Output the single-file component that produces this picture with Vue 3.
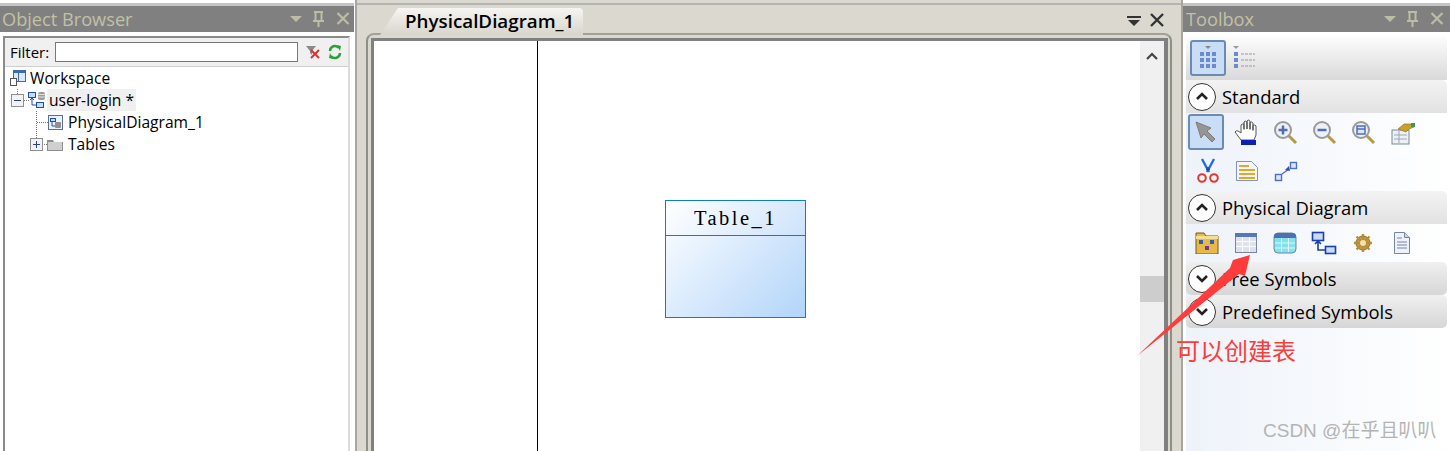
<script setup>
const treeRows = [
  { label: 'Workspace', kind: 'workspace', indent: 10, selected: false },
  { label: 'user-login *', kind: 'model', indent: 28, selected: true },
  { label: 'PhysicalDiagram_1', kind: 'diagram', indent: 48, selected: false },
  { label: 'Tables', kind: 'folder', indent: 47, selected: false },
];
</script>

<template>
  <div class="app">
    <section class="panel panel--left">
      <header class="titlebar">
        <span class="titlebar__text">Object Browser</span>
        <svg class="titlebar__icons" width="66" height="20" viewBox="0 0 66 20">
          <path d="M2 7h12l-6 6z" fill="#bdbca4" />
          <path d="M26 3h9M27.500 3v9M33.500 3v9M25 12h11M30.500 12v6" stroke="#bdbca4" stroke-width="2" fill="none" />
          <path d="M49.500 4l11 11M60.500 4l-11 11" stroke="#bdbca4" stroke-width="2.200" />
        </svg>
      </header>
      <div class="browser">
        <div class="filter">
          <label class="filter__label">Filter:</label>
          <input class="filter__input" type="text" />
          <svg width="16" height="16" viewBox="0 0 16 16">
            <path d="M1 2h10L7 7v4L5 9V7z" fill="#8a8a8a" />
            <path d="M6 6l8 8M14 6l-8 8" stroke="#d8342c" stroke-width="2" />
          </svg>
          <svg class="filter__refresh" width="14" height="16" viewBox="0 0 14 16">
            <path d="M2 7a5 5 0 0 1 9-3M12 9a5 5 0 0 1-9 3" stroke="#2f9e3a" stroke-width="2.400" fill="none" />
            <path d="M9 1l4 1-1 5zM5 15l-4-1 1-5z" fill="#2f9e3a" />
          </svg>
        </div>
        <div class="tree">
          <svg class="tree__lines" width="60" height="90" viewBox="0 0 60 90">
            <path d="M17.500 22v6M24 33.500h5M36.500 44v33M37 55.500h12M44 77.500h3" stroke="#777" stroke-dasharray="1 1" fill="none" />
            <rect x="11.500" y="27.500" width="12" height="12" fill="#f2f2f2" stroke="#8f8f8f" />
            <path d="M14 33.500h7" stroke="#29408c" />
            <rect x="30.500" y="71.500" width="12" height="12" fill="#f2f2f2" stroke="#8f8f8f" />
            <path d="M33 77.500h7M36.500 74v7" stroke="#29408c" />
          </svg>
          <div
            v-for="row in treeRows"
            :key="row.label"
            class="tree__row"
            :style="{ paddingLeft: row.indent + 'px' }"
          >
            <svg v-if="row.kind === 'workspace'" width="17" height="18" viewBox="0 0 17 18">
              <rect x="3.500" y="1.500" width="12" height="11" fill="#dce8f8" stroke="#3f68b4" />
              <path d="M3 2h13v2H3z" fill="#3f68b4" />
              <path d="M8.500 4v8" stroke="#3f68b4" />
              <rect x="0.500" y="9.500" width="6" height="7" fill="#fff" stroke="#555" />
            </svg>
            <svg v-else-if="row.kind === 'model'" width="18" height="18" viewBox="0 0 18 18">
              <rect x="0.500" y="1.500" width="7" height="5" fill="#c8dcf6" stroke="#1f4fae" />
              <rect x="8.500" y="11.500" width="7" height="5" fill="#c8dcf6" stroke="#1f4fae" />
              <path d="M4 7v7h4M2 9l2-2 2 2" stroke="#1f4fae" fill="none" />
              <rect x="10" y="1" width="7" height="8" rx="2" fill="#9a9a9a" />
              <path d="M10 3.500h7M10 6h7" stroke="#e4e4e4" />
            </svg>
            <svg v-else-if="row.kind === 'diagram'" width="17" height="15" viewBox="0 0 17 15">
              <rect x="0.500" y="0.500" width="14" height="14" fill="#eef2fa" stroke="#5a6f98" />
              <rect x="2.500" y="3.500" width="5" height="3" fill="#c8dcf6" stroke="#1f4fae" />
              <rect x="7" y="7" width="6" height="6" rx="1" fill="#8f8f8f" />
              <path d="M4 7v4h3" stroke="#1f4fae" fill="none" />
            </svg>
            <svg v-else width="18" height="13" viewBox="0 0 18 13">
              <path d="M0 2h6l1 2h9v9H0z" fill="#8e8e8e" />
              <path d="M1 4h14v8H1z" fill="#cfcfcf" />
            </svg>
            <span class="tree__label" :class="{ 'tree__label--selected': row.selected }">{{ row.label }}</span>
          </div>
        </div>
      </div>
    </section>

    <section class="panel panel--center">
      <div class="tabstrip">
        <div class="tab">PhysicalDiagram_1</div>
        <svg class="tabstrip__icons" width="50" height="20" viewBox="0 0 50 20">
          <path d="M1 6h14v2H1zM2 10h12l-6 6z" fill="#333" />
          <path d="M25 4l12 12M37 4L25 16" stroke="#333" stroke-width="2.400" />
        </svg>
      </div>
      <div class="frame">
        <div class="frame__inner">
          <div class="canvas">
            <div class="canvas__line"></div>
            <div class="entity">
              <div class="entity__name">Table_1</div>
              <div class="entity__body"></div>
            </div>
          </div>
          <div class="scrollbar">
            <svg class="scrollbar__up" width="14" height="10" viewBox="0 0 14 10">
              <path d="M2 8l5-5 5 5" stroke="#444" stroke-width="2.200" fill="none" />
            </svg>
            <div class="scrollbar__thumb"></div>
          </div>
        </div>
      </div>
    </section>

    <section class="panel panel--right">
      <header class="titlebar">
        <span class="titlebar__text">Toolbox</span>
        <svg class="titlebar__icons" width="66" height="20" viewBox="0 0 66 20">
          <path d="M2 7h12l-6 6z" fill="#bdbca4" />
          <path d="M26 3h9M27.500 3v9M33.500 3v9M25 12h11M30.500 12v6" stroke="#bdbca4" stroke-width="2" fill="none" />
          <path d="M49.500 4l11 11M60.500 4l-11 11" stroke="#bdbca4" stroke-width="2.200" />
        </svg>
      </header>
      <div class="toolbox">
        <div class="viewbar">
          <button class="toolbtn toolbtn--active">
            <svg width="20" height="24" viewBox="0 0 20 24">
              <path d="M7 0h6l-3 3z" fill="#888" />
              <g fill="#6b8ccc">
                <rect x="2" y="6" width="4" height="4" /><rect x="8" y="6" width="4" height="4" /><rect x="14" y="6" width="4" height="4" />
                <rect x="2" y="12" width="4" height="4" /><rect x="8" y="12" width="4" height="4" /><rect x="14" y="12" width="4" height="4" />
                <rect x="2" y="18" width="4" height="4" /><rect x="8" y="18" width="4" height="4" /><rect x="14" y="18" width="4" height="4" />
              </g>
            </svg>
          </button>
          <svg class="viewbar__list" width="24" height="24" viewBox="0 0 24 24">
            <path d="M1 0h6L4 3z" fill="#999" />
            <g fill="#6b8ccc"><rect x="2" y="6" width="4" height="4" /><rect x="2" y="12" width="4" height="4" /><rect x="2" y="18" width="4" height="4" /></g>
            <path d="M9 8h14M9 14h14M9 20h14" stroke="#999" stroke-dasharray="3 1" />
          </svg>
        </div>

        <div class="group">
          <span class="group__toggle"><svg width="14" height="9" viewBox="0 0 14 9"><path d="M2 7l5-5 5 5" stroke="#222" stroke-width="2.600" fill="none" /></svg></span>
          Standard
        </div>
        <div class="tools">
          <span class="tool tool--active">
            <svg width="26" height="26" viewBox="0 0 26 26">
              <path d="M3 3l15 6-4 3 8 8-3 3-8-8-3 4z" fill="#959595" stroke="#7d7d7d" />
            </svg>
          </span>
          <span class="tool">
            <svg width="26" height="28" viewBox="0 0 26 28">
              <path d="M7 21L1 13q1-2 3-1l3 2V6q1-2 3 0v4V3q1-2 3 0v7V2q1-2 3 0v8V4q1-2 3 0v7-4q2-2 3 0v9l-2 5z" fill="#fff" stroke="#555" />
              <path d="M10 3v8M13 2v8M16 3v8M19 5v7" stroke="#666" stroke-width="0.800" />
              <rect x="7" y="21" width="15" height="5" fill="#0f1fb4" />
            </svg>
          </span>
          <span class="tool">
            <svg width="26" height="26" viewBox="0 0 26 26">
              <path d="M15 15l8 8" stroke="#b89a3c" stroke-width="3" />
              <circle cx="10" cy="10" r="8" fill="#eef0f6" stroke="#9a9a9a" stroke-width="2" />
              <path d="M5.500 10h9M10 5.500v9" stroke="#4f6fb4" stroke-width="2.500" />
            </svg>
          </span>
          <span class="tool">
            <svg width="26" height="26" viewBox="0 0 26 26">
              <path d="M15 15l8 8" stroke="#b89a3c" stroke-width="3" />
              <circle cx="10" cy="10" r="8" fill="#eef0f6" stroke="#9a9a9a" stroke-width="2" />
              <path d="M5.500 10h9" stroke="#4f6fb4" stroke-width="2.500" />
            </svg>
          </span>
          <span class="tool">
            <svg width="26" height="26" viewBox="0 0 26 26">
              <path d="M15 15l8 8" stroke="#b89a3c" stroke-width="3" />
              <circle cx="10" cy="10" r="8" fill="#eef0f6" stroke="#9a9a9a" stroke-width="2" />
              <rect x="6" y="6" width="8" height="8" fill="#dbe6fa" stroke="#4f6fb4" stroke-width="1.500" />
              <path d="M6 9h8" stroke="#4f6fb4" stroke-width="1.500" />
            </svg>
          </span>
          <span class="tool">
            <svg width="26" height="26" viewBox="0 0 26 26">
              <rect x="2" y="10" width="17" height="14" fill="#eef0f4" stroke="#7a8a9a" />
              <path d="M4 15h13M4 19h13M9 11v12" stroke="#9aa8b8" />
              <path d="M8 9l6-5h7l3 3-5 2-3 3z" fill="#c9a227" stroke="#7d6a1e" stroke-width="0.600" />
              <path d="M21 3h4v4h-4z" fill="#3e9a50" />
            </svg>
          </span>
          <span class="tool">
            <svg width="24" height="26" viewBox="0 0 24 26">
              <path d="M6 1l7 13M18 1l-7 13" stroke="#1f6fe0" stroke-width="2.400" />
              <circle cx="12" cy="11" r="2" fill="#1f4fae" />
              <circle cx="6" cy="20" r="3.800" fill="none" stroke="#e03a30" stroke-width="2" />
              <circle cx="18" cy="20" r="3.800" fill="none" stroke="#e03a30" stroke-width="2" />
            </svg>
          </span>
          <span class="tool">
            <svg width="24" height="22" viewBox="0 0 24 22">
              <path d="M1.500 1.500h15l6 6v13h-21z" fill="#f4f6fc" stroke="#7f93c4" />
              <path d="M4 6h10M4 10h16M4 14h16M4 18h16" stroke="#e0ab22" stroke-width="2" />
            </svg>
          </span>
          <span class="tool">
            <svg width="24" height="22" viewBox="0 0 24 22">
              <rect x="1.500" y="14.500" width="6" height="6" fill="#dbe6fa" stroke="#4f6fc4" stroke-width="1.400" />
              <rect x="16.500" y="2.500" width="6" height="6" fill="#dbe6fa" stroke="#4f6fc4" stroke-width="1.400" />
              <path d="M8 14l7-5" stroke="#4f6fc4" stroke-width="1.400" />
              <path d="M15 6l1 5-5-1z" fill="#33539c" />
            </svg>
          </span>
        </div>

        <div class="group">
          <span class="group__toggle"><svg width="14" height="9" viewBox="0 0 14 9"><path d="M2 7l5-5 5 5" stroke="#222" stroke-width="2.600" fill="none" /></svg></span>
          Physical Diagram
        </div>
        <div class="tools tools--single">
          <span class="tool">
            <svg width="24" height="22" viewBox="0 0 24 22">
              <path d="M1 1h8l2 3h12v18H1z" fill="#e8b948" stroke="#6e5a1e" />
              <path d="M1 4h22v3H1z" fill="#f6dd90" />
              <rect x="4" y="8" width="4" height="4" fill="#2f5fb4" /><rect x="15" y="8" width="4" height="4" fill="#2f5fb4" /><rect x="10" y="14" width="4" height="4" fill="#6a3a9c" />
            </svg>
          </span>
          <span class="tool">
            <svg width="24" height="22" viewBox="0 0 24 22">
              <rect x="1.500" y="1.500" width="21" height="19" fill="#dfe2ea" stroke="#7486a8" />
              <rect x="1" y="1" width="22" height="4" fill="#5a78b8" />
              <path d="M2 9.500h20M2 14.500h20M8.500 5v15M15.500 5v15" stroke="#fff" />
            </svg>
          </span>
          <span class="tool">
            <svg width="24" height="22" viewBox="0 0 24 22">
              <rect x="1" y="1" width="22" height="20" rx="4" fill="#7fe4ec" stroke="#7486a8" />
              <path d="M1 6V5a4 4 0 0 1 4-4h14a4 4 0 0 1 4 4v1z" fill="#4f6fb4" />
              <path d="M2 11h20M2 16h20M8.500 6v14M15.500 6v14" stroke="#e6f4fa" />
            </svg>
          </span>
          <span class="tool">
            <svg width="26" height="24" viewBox="0 0 26 24">
              <rect x="1.500" y="1.500" width="11" height="8" fill="#c8dcf6" stroke="#1a3fb0" stroke-width="1.600" />
              <rect x="14.500" y="15.500" width="10" height="7" fill="#c8dcf6" stroke="#1a3fb0" stroke-width="1.600" />
              <path d="M7 10v9h7M4 13l3-3 3 3" stroke="#1a3fb0" stroke-width="1.600" fill="none" />
            </svg>
          </span>
          <span class="tool">
            <svg width="20" height="20" viewBox="0 0 20 20">
              <circle cx="10" cy="10" r="7" fill="#c49a48" stroke="#8a6a2a" />
              <path d="M10 1v18M1 10h18M3.500 3.500l13 13M16.500 3.500l-13 13" stroke="#b78d3e" stroke-width="2.400" />
              <circle cx="10" cy="10" r="3" fill="#f4e2a8" />
            </svg>
          </span>
          <span class="tool">
            <svg width="20" height="24" viewBox="0 0 20 24">
              <path d="M2.500 1.500h10l5 5v16h-15z" fill="#eef2fa" stroke="#7486a8" />
              <path d="M12.500 1.500v5h5" fill="#c8d4e8" stroke="#7486a8" />
              <path d="M5 7h5M5 11h10M5 14h10M5 17h10" stroke="#7486a8" />
            </svg>
          </span>
        </div>

        <div class="group group--closed">
          <span class="group__toggle"><svg width="14" height="9" viewBox="0 0 14 9"><path d="M2 2l5 5 5-5" stroke="#222" stroke-width="2.600" fill="none" /></svg></span>
          Free Symbols
        </div>
        <div class="group group--closed">
          <span class="group__toggle"><svg width="14" height="9" viewBox="0 0 14 9"><path d="M2 2l5 5 5-5" stroke="#222" stroke-width="2.600" fill="none" /></svg></span>
          Predefined Symbols
        </div>
      </div>
    </section>

    <!-- annotation drawn over the screenshot -->
    <svg class="arrow" width="130" height="110" viewBox="0 0 130 110">
      <path d="M1 106L94 18 97 10 114 5 109 26 103 24z" fill="#ff3b3b" />
    </svg>
    <div class="note">可以创建表</div>
    <div class="watermark">CSDN @在乎且叭叭</div>
  </div>
</template>

<style>
body {
  margin: 0;
  overflow: hidden;
  background: #fff;
}
</style>

<style scoped>
.app {
  position: relative;
  display: flex;
  width: 1450px;
  height: 451px;
  overflow: hidden;
  font-family: "Open Sans", "Liberation Sans", sans-serif;
  color: #000;
  background: #fff;
}

.panel {
  display: flex;
  flex-direction: column;
  height: 451px;
  box-sizing: border-box;
  padding-top: 3px;
}

.panel--left {
  width: 354px;
}

.panel--center {
  flex: 1;
  margin-left: 1px;
  border-left: 2px solid #a6a6a6;
  background: #dbd8d0;
}

.panel--right {
  width: 269px;
  border-left: 2px solid #a9a59c;
}

.titlebar {
  display: flex;
  align-items: center;
  justify-content: space-between;
  height: 26px;
  flex: none;
  padding-left: 2px;
  background: #808080;
  border-top: 3px solid #c4c4c4;
}

.panel--right .titlebar {
  padding-left: 3px;
}

.panel--right .titlebar__icons {
  margin-right: 2px;
}

.titlebar__text {
  font-size: 18.200px;
  line-height: 26px;
  color: #c2c1a6;
}

.browser {
  flex: 1;
  margin: 4px 4px 0 3px;
  border: 2px solid #8a8a8a;
  border-right-color: #dcdcdc;
  border-bottom: 0;
}

.filter {
  display: flex;
  align-items: center;
  height: 28px;
  padding-left: 5px;
  background: #f0f0f0;
  border-bottom: 1px solid #d0d0d0;
}

.filter__label {
  width: 45px;
  font-size: 15px;
}

.filter__input {
  box-sizing: border-box;
  width: 243px;
  height: 20px;
  margin-right: 7px;
  border: 1px solid #777;
  background: #fff;
  padding: 0;
}

.filter__refresh {
  margin-left: 7px;
}

.tree {
  position: relative;
}

.tree__lines {
  position: absolute;
  top: 0;
  left: -5px;
}

.tree__row {
  position: relative;
  display: flex;
  align-items: center;
  gap: 3px;
  height: 22px;
  font-size: 15.600px;
  box-sizing: border-box;
  margin-left: -5px;
}

.tree__label {
  line-height: 22px;
}

.tree__label--selected {
  padding: 0 2px;
  margin-left: -2px;
  background: #f0f0f0;
}

.tabstrip {
  position: relative;
  display: flex;
  align-items: flex-end;
  height: 30px;
  flex: none;
  box-sizing: border-box;
  border-top: 2px solid #b4b4b4;
  padding-left: 23px;
}

.tab {
  position: relative;
  z-index: 1;
  width: 203px;
  height: 27px;
  margin-bottom: -2px;
  box-sizing: border-box;
  padding-left: 25px;
  font-size: 18.800px;
  font-weight: 600;
  line-height: 26px;
  white-space: nowrap;
  border-radius: 0 4px 0 0;
  clip-path: polygon(18px 0, 100% 0, 100% 100%, 0 100%);
  background: linear-gradient(#f6f5f1, #d8d5cd);
}

.tabstrip__icons {
  position: absolute;
  top: 5px;
  right: 5px;
}

.frame {
  flex: 1;
  margin: 0 9px;
  padding: 3px 2px 0 3px;
  border: 2px solid #8f8f8a;
  border-top-color: #a3a09a;
  border-bottom: 0;
  border-radius: 8px 8px 0 0;
  background: #dbd8d0;
}

.frame__inner {
  display: flex;
  height: 100%;
  border: 3px solid #808080;
  border-right-width: 4px;
  border-bottom: 0;
  box-sizing: border-box;
}

.canvas {
  position: relative;
  flex: 1;
  background: #fff;
}

.canvas__line {
  position: absolute;
  top: 0;
  bottom: 0;
  left: 163px;
  width: 1px;
  background: #000;
}

.entity {
  position: absolute;
  left: 291px;
  top: 159px;
  width: 141px;
  height: 118px;
  box-sizing: border-box;
  border: 1px solid #0f80bf;
  background: linear-gradient(135deg, #fff 0%, #b2d5fa 100%);
}

.entity__name {
  height: 35px;
  box-sizing: border-box;
  border-bottom: 1px solid #0f80bf;
  font-family: "Liberation Serif", serif;
  font-size: 20.500px;
  letter-spacing: 2.500px;
  line-height: 35px;
  text-align: center;
  background: linear-gradient(135deg, #fff 0%, #cde3fb 100%);
}

.scrollbar {
  position: relative;
  width: 24px;
  flex: none;
  background: #f0f0f0;
}

.scrollbar__up {
  display: block;
  margin: 10px auto 0;
}

.scrollbar__thumb {
  position: absolute;
  left: 0;
  right: 0;
  top: 235px;
  height: 26px;
  background: #cdcdcd;
}

.toolbox {
  flex: 1;
  margin: 4px 0 0 3px;
  padding-right: 3px;
  background: linear-gradient(90deg, #eef3fa, #fff);
}

.viewbar {
  display: flex;
  align-items: center;
  gap: 6px;
  height: 44px;
  padding-left: 4px;
  background: linear-gradient(#fdfdfd, #d9d9d9);
}

.toolbtn {
  display: flex;
  align-items: center;
  justify-content: center;
  width: 36px;
  height: 36px;
  padding: 0;
  border: 2px solid #6b8cb0;
  border-radius: 3px;
  background: #c9def6;
}

.group {
  display: flex;
  align-items: center;
  gap: 6px;
  height: 33px;
  box-sizing: border-box;
  padding-left: 2px;
  font-size: 18.400px;
  border-radius: 5px 5px 0 0;
  background: linear-gradient(#f3f3f3, #e2e2e2);
}

.group--closed {
  border-radius: 5px;
  background: linear-gradient(#f0f0f0, #d6d6d6);
}

.group__toggle {
  display: flex;
  align-items: center;
  justify-content: center;
  width: 28px;
  height: 28px;
  box-sizing: border-box;
  border: 1.500px solid #333;
  border-radius: 50%;
  background: #fff;
}

.tools {
  display: grid;
  grid-template-columns: repeat(6, 39px);
  grid-auto-rows: 38px;
  padding: 1px 0 1px 2px;
}

.tools--single {
  padding: 0 0 0 1px;
}

.tool {
  display: flex;
  align-items: center;
  justify-content: center;
  width: 39px;
  height: 38px;
  box-sizing: border-box;
}

.tool--active {
  width: 36px;
  height: 36px;
  border: 2px solid #6b8cb0;
  border-radius: 3px;
  background: #c9def6;
}

.arrow {
  position: absolute;
  left: 1136px;
  top: 250px;
}

.note {
  position: absolute;
  left: 1176px;
  top: 333px;
  font-family: "Noto Sans CJK SC", sans-serif;
  font-size: 24px;
  line-height: 34px;
  color: #ff3b3b;
}

.watermark {
  position: absolute;
  left: 1263px;
  top: 418px;
  font-family: "Liberation Sans", "Noto Sans CJK SC", sans-serif;
  font-size: 19px;
  line-height: 26px;
  color: #b4b4b4;
}
</style>
